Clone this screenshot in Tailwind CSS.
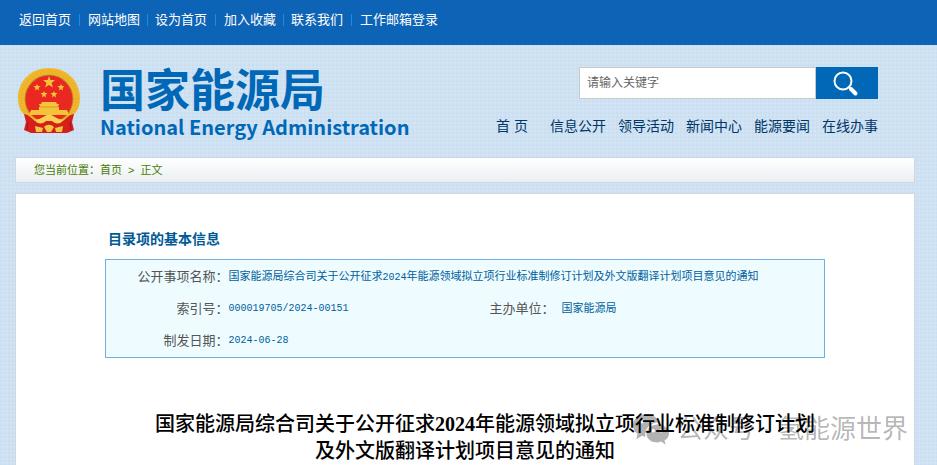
<!DOCTYPE html>
<html lang="zh-CN">
<head>
    <meta charset="UTF-8">
    <meta name="viewport" content="width=device-width, initial-scale=1.0">
    <title>国家能源局</title>
    <script src="https://cdn.jsdelivr.net/npm/@tailwindcss/browser@4"></script>
</head>
<body class="min-h-screen overflow-hidden bg-[#d3e5f5] bg-[linear-gradient(#bdd5ea40_2px,transparent_2px),linear-gradient(90deg,#bdd5ea40_2px,transparent_2px)] bg-[size:4px_4px] font-['Liberation_Sans','Noto_Sans_CJK_SC',sans-serif]">

    <!-- Top bar -->
    <nav class="flex h-[45px] items-start bg-[#0d63b6] px-[19px] pt-[10px] text-[13px] leading-5 text-white">
        <a href="#">返回首页</a>
        <span class="mx-2 mt-1 h-3 w-px bg-[#1b8be6]"></span>
        <a href="#">网站地图</a>
        <span class="mx-[7px] mt-1 h-3 w-px bg-[#1b8be6]"></span>
        <a href="#">设为首页</a>
        <span class="mx-2 mt-1 h-3 w-px bg-[#1b8be6]"></span>
        <a href="#">加入收藏</a>
        <span class="mx-[7px] mt-1 h-3 w-px bg-[#1b8be6]"></span>
        <a href="#">联系我们</a>
        <span class="mx-2 mt-1 h-3 w-px bg-[#1b8be6]"></span>
        <a href="#">工作邮箱登录</a>
    </nav>

    <div class="mr-[22px] ml-[15px]">
        <!-- Logo, search and menu -->
        <header class="flex h-28 justify-between pr-[37px]">
            <a href="#" class="flex pt-[22px] text-[#0068b7]">
                <svg class="h-[68px] w-[68px]" viewBox="0 0 68 68" aria-hidden="true">
                    <path d="M34 1 C16 1 3 14 3 31 C3 39 5 44 10 48 L22 58 H46 L58 48 C63 44 65 39 65 31 C65 14 52 1 34 1 Z" fill="#f0b92d"/>
                    <circle cx="34" cy="32" r="27.5" fill="none" stroke="#dc9720" stroke-width="4" stroke-dasharray="1 2" opacity=".4"/>
                    <circle cx="34" cy="32" r="24.5" fill="#c58a22"/>
                    <circle cx="34" cy="32" r="23.5" fill="#e82821"/>
                    <g fill="#f5c33a">
                        <path d="M34 9 L35.5 13 H40 L36.5 16 L38 20.5 L34 18 L30 20.5 L31.5 16 L28 13 H32.5 Z"/>
                        <path d="M22 17 L23 19 H25.5 L23.5 21 L24 23.5 L22 22 L20 23.5 L20.5 21 L18.5 19 H21 Z"/>
                        <path d="M46 17 L47 19 H49.5 L47.5 21 L48 23.5 L46 22 L44 23.5 L44.5 21 L42.5 19 H45 Z"/>
                        <path d="M29 24 L30 26 H32.5 L30.5 28 L31 30.5 L29 29 L27 30.5 L27.5 28 L25.5 26 H28 Z"/>
                        <path d="M39 24 L40 26 H42.5 L40.5 28 L41 30.5 L39 29 L37 30.5 L37.5 28 L35.5 26 H38 Z"/>
                        <path d="M27 35 H41 L42 37 H44 L43 40 H25 L24 37 H26 Z"/>
                        <path d="M24 40 H44 V43 H52 L54 48 H14 L16 43 H24 Z"/>
                    </g>
                    <path d="M25 40 H43" stroke="#d4821f" stroke-width=".7"/>
                    <path d="M9 47 C15 48 17 52 20 54 H48 C51 52 53 48 59 47 L57 55 L59 63 L52 66 H16 L9 63 L11 55 Z" fill="#d51f1c"/>
                    <path d="M13 55 L12 63 M55 55 L56 63" stroke="#9c1413"/>
                    <path d="M19 52 C24 54 27 50 30 49 C33 47 35 47 38 49 C41 50 44 54 49 52 C46 58 40 57 37 54 H31 C28 57 22 58 19 52 Z" fill="#f8d150"/>
                    <path d="M20 59 L28 61 L27 65 L21 65 Z M48 59 L40 61 L41 65 L47 65 Z M29 60 C32 57 36 57 39 60 L36 65 H32 Z" fill="#f3c640"/>
                </svg>
                <span class="flex flex-col pt-[2px] pl-[17px] font-bold">
                    <span class="text-[45px] leading-[46px]">国家能源局</span>
                    <span class="font-['Noto_Sans_CJK_SC',sans-serif] text-[20px] leading-6">National Energy Administration</span>
                </span>
            </a>

            <div class="flex flex-col items-end pt-[22px]">
                <form class="flex h-8">
                    <input type="text" aria-label="请输入关键字" placeholder="请输入关键字" class="w-[237px] border border-[#c9c9c9] bg-white px-[7px] text-[12px] placeholder:text-[#666]">
                    <button type="button" aria-label="搜索" class="flex w-[62px] items-center justify-center bg-[#0068b7]">
                        <svg class="mr-1 h-7 w-7" viewBox="0 0 28 28" fill="none" stroke="#fff" aria-hidden="true">
                            <circle cx="12" cy="12" r="8.5" stroke-width="2"/>
                            <path d="M18 18 L20 20" stroke-width="2"/>
                            <path d="M20 20 L24.5 24.5" stroke-width="4" stroke-linecap="round"/>
                        </svg>
                    </button>
                </form>
                <nav class="mt-4 flex gap-3 text-[14px] leading-[22px] text-[#003567]">
                    <a href="#" class="mr-[10px]">首 页</a>
                    <a href="#">信息公开</a>
                    <a href="#">领导活动</a>
                    <a href="#">新闻中心</a>
                    <a href="#">能源要闻</a>
                    <a href="#">在线办事</a>
                </nav>
            </div>
        </header>

        <!-- Breadcrumb -->
        <div class="flex h-[26px] items-center gap-[6px] border border-[#d3d7da] bg-linear-to-b from-white to-[#ebeff2] pl-[18px] text-[11px] text-[#477c00]">
            <span>您当前位置：<a href="#">首页</a></span>
            <span>&gt;</span>
            <span>正文</span>
        </div>

        <!-- Article -->
        <main class="relative mt-[10px] min-h-[272px] border border-[#d3d7da] bg-white px-[89px] pt-[34px]">
            <h2 class="pl-[3px] text-[14px] leading-[22px] font-bold text-[#005a96]">目录项的基本信息</h2>
            <table class="mt-[9px] w-full table-fixed border border-[#6fafe6] bg-[#eefcff] text-left text-[11px] text-[#00609c]">
                <colgroup>
                    <col class="w-[123px]">
                    <col>
                    <col class="w-[83px]">
                    <col class="w-[263px]">
                </colgroup>
                <tr class="h-[33px]">
                    <th class="text-right text-[13px] font-normal text-[#555]">公开事项名称：</th>
                    <td colspan="3">国家能源局综合司关于公开征求<span class="font-['Liberation_Mono',monospace] text-[10px]">2024</span>年能源领域拟立项行业标准制修订计划及外文版翻译计划项目意见的通知</td>
                </tr>
                <tr class="h-8">
                    <th class="text-right text-[13px] font-normal text-[#555]">索引号：</th>
                    <td class="font-['Liberation_Mono',monospace] text-[10px]">000019705/2024-00151</td>
                    <th class="pr-[7px] text-right text-[13px] font-normal text-[#555]">主办单位：</th>
                    <td>国家能源局</td>
                </tr>
                <tr class="h-[33px]">
                    <th class="text-right text-[13px] font-normal text-[#555]">制发日期：</th>
                    <td colspan="3" class="font-['Liberation_Mono',monospace] text-[10px]">2024-06-28</td>
                </tr>
            </table>

            <h1 class="-mx-5 mt-[53px] indent-10 text-center font-['Liberation_Serif','Noto_Sans_CJK_SC',serif] text-[20px] leading-[27px] font-medium text-black">国家能源局综合司关于公开征求<b>2024</b>年能源领域拟立项行业标准制修订计划<br>及外文版翻译计划项目意见的通知</h1>

            <!-- Account watermark -->
            <div class="absolute top-[215px] right-[6px] flex items-center text-[26px] leading-10 text-black/30">
                <svg class="mr-2 h-9 w-9" viewBox="0 0 32 32" aria-hidden="true">
                    <path fill="#000" fill-opacity=".3" fill-rule="evenodd" d="M12 3 C5 3 0 7 0 13 C0 16 2 19 4 20 L3 25 L8 22 L11 23 C10 15 16 10 24 10 C22 6 18 3 12 3 Z M8 8 A1.5 1.5 0 1 1 8 11 A1.5 1.5 0 1 1 8 8 Z M16 8 A1.5 1.5 0 1 1 16 11 A1.5 1.5 0 1 1 16 8 Z"/>
                    <path fill="#000" fill-opacity=".3" fill-rule="evenodd" d="M22 12 C16 12 12 16 12 20 C12 25 16 28 22 28 L25 27 L29 30 L28 26 C31 25 32 22 32 20 C32 16 28 12 22 12 Z M18 16 A1.3 1.3 0 1 1 18 19 A1.3 1.3 0 1 1 18 16 Z M25 16 A1.3 1.3 0 1 1 25 19 A1.3 1.3 0 1 1 25 16 Z"/>
                </svg>
                <span>公众号 · 氢能源世界</span>
            </div>
        </main>
    </div>

</body>
</html>
